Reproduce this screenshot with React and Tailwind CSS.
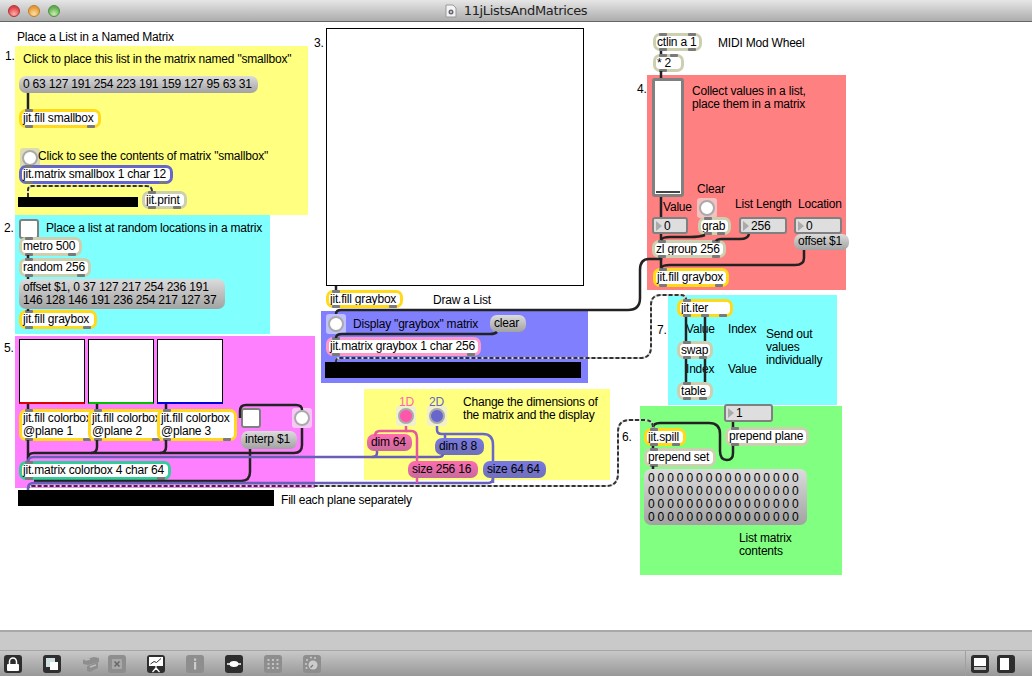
const cordDark = '#222'

function Tabs({ count, className }) {
  return (
    <div className={`absolute left-[3px] right-[3px] flex justify-between ${className}`}>
      {Array.from({ length: count }).map((_, i) => (
        <span key={i} className="w-[8px] h-[3px] rounded-[1px] bg-[#7a7a7a]" />
      ))}
    </div>
  )
}

function Obj({ className, tops = 1, bots = 2, children }) {
  return (
    <div className={`absolute rounded-[7px] border-[3px] bg-white ${className}`}>
      <div className="h-full overflow-hidden whitespace-pre pl-[1px] leading-[13px] text-black">{children}</div>
      <Tabs count={tops} className="-top-[3px]" />
      <Tabs count={bots} className="-bottom-[3px]" />
    </div>
  )
}

function Msg({ className, children }) {
  return (
    <div className={`absolute whitespace-pre rounded-[7px] pl-[4px] leading-[13px] text-black ${className}`}>
      {children}
    </div>
  )
}

function Num({ className, children }) {
  return (
    <div className={`absolute flex items-center rounded-[3px] border-2 border-[#808080] bg-[#dedede] text-black ${className}`}>
      <svg width="8" height="12" viewBox="0 0 8 12" className="ml-[1px] mr-[1px]">
        <path d="M1 1 L7 6 L1 11 Z" fill="#aaa" />
      </svg>
      {children}
    </div>
  )
}

function Bang({ className, fill = 'bg-white' }) {
  return (
    <div className={`absolute flex h-[20px] w-[20px] items-center justify-center rounded-[3px] ${className}`}>
      <span className={`h-[16px] w-[16px] rounded-full border-[2px] border-[#aaa] ${fill}`} />
    </div>
  )
}

function Toggle({ className }) {
  return <div className={`absolute h-[20px] w-[20px] rounded-[3px] border-[2px] border-[#808080] bg-white ${className}`} />
}

function Label({ className, children }) {
  return <div className={`absolute mt-[1px] whitespace-pre leading-[13px] ${className}`}>{children}</div>
}

function Dashed({ d }) {
  return (
    <g fill="none" strokeWidth="2">
      <path d={d} stroke="#d8d8d8" />
      <path d={d} stroke="#333" strokeDasharray="4 2" />
    </g>
  )
}

function Cords() {
  return (
    <svg viewBox="0 22 1032 608" className="absolute inset-0 h-full w-full">
      <g fill="none" stroke={cordDark} strokeWidth="2.5">
        <path d="M28 93V109" />
        <path d="M28 255V258M28 277V279M28 309V311" />
        <path d="M28 404V409M97 404V409M166 404V409" />
        <path d="M28 440V461" />
        <path d="M97 440V447Q97 453 91 453H34Q28 453 28 458" />
        <path d="M166 440V447Q166 453 160 453H91" />
        <path d="M302 428V445Q302 453 294 453H160" />
        <path d="M240 418V411Q240 405 246 405H296Q302 405 302 410" />
        <path d="M250 449V472Q250 481 241 481H34" />
        <path d="M336 286V290" />
        <path d="M661 258V259H649Q640 259 640 270V298Q640 310 628 310H341Q336 310 336 314" />
        <path d="M497 332Q495 334 490 334H342Q336 334 336 338" />
        <path d="M661 51V54M661 71V78M661 197V217M661 234V240M661 258V268" />
        <path d="M705 235Q700 237 690 237H670Q662 237 661 240" />
        <path d="M749 234Q748 239 740 239H722Q717 239 716 241" />
        <path d="M804 250V258Q804 265 795 265H670Q662 265 661 268" />
        <path d="M686 317V341M705 317V341M686 359V382M705 359V382" />
        <path d="M733 422V427" />
        <path d="M733 446V453Q733 460 727 460Q720 460 720 451V434Q720 423 709 423H660Q653 423 653 428" />
        <path d="M653 446V448M653 466V469" />
      </g>
      <Dashed d="M28 197V190Q28 186 32 186H146Q152 186 152 191" />
      <Dashed d="M336 362V361Q336 358 340 358H640Q651 358 651 347V305Q651 295 661 295H680Q686 295 686 299" />
      <Dashed d="M28 490V489Q28 486 33 486H606Q617 486 618 475V432Q618 420 630 420H645Q653 420 653 428" />
      <g fill="none" stroke="#6a5fb8" strokeWidth="2.5">
        <path d="M28 461V462Q28 457 34 457H438Q443 457 443 454" />
        <path d="M377 451V453Q377 457 372 457" />
        <path d="M28 490V488Q28 483 34 483H488Q493 483 493 478" />
      </g>
      <g fill="none" stroke="#e6579e" strokeWidth="2.5">
        <path d="M406 426V431H380Q375 431 375 436" />
        <path d="M406 431H411Q417 431 417 438V461M417 478V483" />
      </g>
      <g fill="none" stroke="#6666cc" strokeWidth="2.5">
        <path d="M437 426V430Q437 434 442 434H483Q493 434 493 445V461M493 478V483" />
        <path d="M445 434V438" />
      </g>
    </svg>
  )
}

function TitleBar() {
  return (
    <div className="relative flex h-[22px] shrink-0 items-center justify-center border-b border-[#666] bg-linear-to-b from-[#e6e6e6] to-[#adadad]">
      <div className="absolute left-[8px] top-[5px] flex gap-[8px]">
        <span className="h-[12px] w-[12px] rounded-full border border-[#a33] bg-[radial-gradient(circle_at_50%_80%,#ffb0a8,#e0404a_70%)]" />
        <span className="h-[12px] w-[12px] rounded-full border border-[#b97f2a] bg-[radial-gradient(circle_at_50%_80%,#ffe0a0,#e89a38_70%)]" />
        <span className="h-[12px] w-[12px] rounded-full border border-[#4f8f3f] bg-[radial-gradient(circle_at_50%_80%,#c8f0b0,#62ad52_70%)]" />
      </div>
      <div className="flex items-center gap-[7px] text-[13px] leading-[16px] text-[#222] [font-family:'DejaVu_Sans',sans-serif]">
        <svg width="12" height="14" viewBox="0 0 12 14">
          <path d="M1 1H8L11 4V13H1Z" fill="#f4f4f4" stroke="#999" />
          <circle cx="6" cy="8" r="2.5" fill="#667" />
          <circle cx="6" cy="8" r="1" fill="#ddd" />
        </svg>
        <span className="tracking-[-0.35px]">11jListsAndMatrices</span>
      </div>
    </div>
  )
}

function Icon({ dim, children, className = '' }) {
  return (
    <svg width="18" height="18" viewBox="0 0 18 18" className={className}>
      <rect width="18" height="18" rx="3" fill={dim ? '#8e8e8e' : '#2e2e2e'} />
      {children}
    </svg>
  )
}

function Toolbar() {
  return (
    <div className="shrink-0">
      <div className="h-[20px] border-t-2 border-[#a8a8a8] bg-[#c9c9c9]" />
      <div className="flex h-[26px] items-center border-t border-[#a6a6a6] bg-linear-to-b from-[#c8c8c8] to-[#989898] pl-[4px] pr-[17px]">
        <Icon>
          <rect x="3" y="9" width="12" height="7" rx="1" fill="#fff" />
          <path d="M5.5 9V6.5a3.5 3.5 0 0 1 7 0V9" fill="none" stroke="#fff" strokeWidth="1.5" />
        </Icon>
        <Icon className="ml-[21px]">
          <rect x="3" y="3" width="9" height="9" fill="#cfe0e2" />
          <rect x="7" y="7" width="8" height="8" fill="#fff" />
        </Icon>
        <svg width="18" height="18" viewBox="0 0 18 18" className="ml-[21px]">
          <path d="M1 5L12 2L17 3V7L6 10L1 9Z" fill="#8e8e8e" />
          <path d="M5 11L16 7V13L8 17L5 16Z" fill="#8e8e8e" />
          <path d="M3 5L8 4M8 12L14 10" stroke="#bdbdbd" strokeWidth="1.5" />
        </svg>
        <Icon dim className="ml-[8px]">
          <rect x="4" y="4" width="10" height="10" rx="1" fill="#a8a8a8" />
          <path d="M6.5 6.5L11.5 11.5M11.5 6.5L6.5 11.5" stroke="#666" strokeWidth="1.5" />
        </Icon>
        <Icon className="ml-[21px]">
          <rect x="2" y="2" width="14" height="9" fill="#fff" />
          <path d="M3.5 9L7 6.5L9.5 7.5L14 3.5" fill="none" stroke="#333" />
          <path d="M9 11V13M9 13L5.5 17M9 13L12.5 17" stroke="#fff" strokeWidth="1.2" />
        </Icon>
        <Icon dim className="ml-[21px]">
          <rect x="8" y="3.5" width="2.2" height="2.2" fill="#ccc" />
          <rect x="8" y="7" width="2.2" height="7.5" fill="#ccc" />
        </Icon>
        <Icon className="ml-[21px]">
          <path d="M2 9H16" stroke="#fff" strokeWidth="1.5" />
          <ellipse cx="9" cy="9" rx="4.5" ry="3" fill="#fff" />
        </Icon>
        <Icon dim className="ml-[21px]">
          <g fill="#c4c4c4">
            <rect x="3.5" y="4" width="2" height="2" /><rect x="8" y="4" width="2" height="2" /><rect x="12.5" y="4" width="2" height="2" />
            <rect x="3.5" y="8" width="2" height="2" /><rect x="8" y="8" width="2" height="2" /><rect x="12.5" y="8" width="2" height="2" />
            <rect x="3.5" y="12" width="2" height="2" /><rect x="8" y="12" width="2" height="2" /><rect x="12.5" y="12" width="2" height="2" />
          </g>
        </Icon>
        <Icon dim className="ml-[21px]">
          <circle cx="10" cy="10" r="4.5" fill="#ccc" />
          <path d="M10 10L7.5 12.5" stroke="#777" strokeWidth="1.2" />
          <g fill="#ccc">
            <circle cx="3" cy="9" r="1" /><circle cx="4" cy="5" r="1" /><circle cx="8" cy="2.5" r="1" /><circle cx="12" cy="3" r="1" /><circle cx="3.5" cy="13" r="1" />
          </g>
        </Icon>
        <div className="ml-auto mr-[5px] h-full w-px bg-[#a0a0a0]" />
        <Icon>
          <rect x="3" y="3" width="12" height="8" fill="#fff" />
          <rect x="3" y="12" width="12" height="3" fill="#bbb" />
        </Icon>
        <Icon className="ml-[8px]">
          <rect x="3" y="3" width="9" height="12" fill="#fff" />
        </Icon>
      </div>
    </div>
  )
}

export default function App() {
  return (
    <div className="flex h-[676px] w-[1032px] flex-col overflow-hidden bg-white text-[12px] tracking-[-0.2px] text-black [font-family:'Liberation_Sans',Arial,sans-serif]">
      <TitleBar />
      <div className="relative flex-1">
        {/* colored panels */}
        <div className="absolute left-[15px] top-[24px] h-[169px] w-[293px] bg-[#ffff80]" />
        <div className="absolute left-[15px] top-[193px] h-[119px] w-[255px] bg-[#80ffff]" />
        <div className="absolute left-[15px] top-[314px] h-[152px] w-[300px] bg-[#ff80ff]" />
        <div className="absolute left-[321px] top-[289px] h-[72px] w-[267px] bg-[#8080ff]" />
        <div className="absolute left-[364px] top-[367px] h-[91px] w-[246px] bg-[#ffff80]" />
        <div className="absolute left-[647px] top-[53px] h-[215px] w-[199px] bg-[#ff8080]" />
        <div className="absolute left-[668px] top-[273px] h-[110px] w-[169px] bg-[#80ffff]" />
        <div className="absolute left-[640px] top-[384px] h-[169px] w-[202px] bg-[#80ff80]" />

        {/* section 1 */}
        <Label className="left-[17px] top-[8px]">Place a List in a Named Matrix</Label>
        <Label className="left-[5px] top-[27px]">1.</Label>
        <Label className="left-[23px] top-[30px]">Click to place this list in the matrix named "smallbox"</Label>
        <Msg className="left-[19px] top-[54px] h-[17px] w-[239px] bg-linear-to-b from-[#dcdcdc] to-[#a2a2a2] pt-[2px]">0 63 127 191 254 223 191 159 127 95 63 31</Msg>
        <Obj className="left-[19px] top-[87px] h-[19px] w-[82px] border-[#ffd91a]">jit.fill smallbox</Obj>
        <Bang className="left-[20px] top-[126px] bg-[#dcdcb0]" />
        <Label className="left-[38px] top-[127px]">Click to see the contents of matrix "smallbox"</Label>
        <Obj className="left-[19px] top-[143px] h-[19px] w-[154px] border-[#6666cc]">jit.matrix smallbox 1 char 12</Obj>
        <div className="absolute left-[18px] top-[175px] h-[10px] w-[120px] bg-black" />
        <Obj className="left-[142px] top-[169px] h-[18px] w-[45px] border-[#ccd0b0]">jit.print</Obj>

        {/* section 2 */}
        <Label className="left-[4px] top-[199px]">2.</Label>
        <Toggle className="left-[19px] top-[197px]" />
        <Label className="left-[46px] top-[199px]">Place a list at random locations in a matrix</Label>
        <Obj className="left-[19px] top-[215px] h-[19px] w-[63px] border-[#ccd0b0]">metro 500</Obj>
        <Obj className="left-[19px] top-[236px] h-[19px] w-[72px] border-[#ccd0b0]">random 256</Obj>
        <Msg className="left-[19px] top-[257px] h-[30px] w-[206px] bg-linear-to-b from-[#dcdcdc] to-[#a2a2a2] pt-[2px]">{'offset $1, 0 37 127 217 254 236 191\n146 128 146 191 236 254 217 127 37'}</Msg>
        <Obj className="left-[19px] top-[288px] h-[19px] w-[78px] border-[#ffd91a]">jit.fill graybox</Obj>

        {/* section 5 */}
        <Label className="left-[4px] top-[319px]">5.</Label>
        <div className="absolute left-[19px] top-[317px] h-[65px] w-[66px] border border-b-2 border-black border-b-[#e00000] bg-white" />
        <div className="absolute left-[88px] top-[317px] h-[65px] w-[66px] border border-b-2 border-black border-b-[#00c000] bg-white" />
        <div className="absolute left-[157px] top-[317px] h-[65px] w-[66px] border border-b-2 border-black border-b-[#0000e0] bg-white" />
        <Obj className="left-[19px] top-[387px] h-[32px] w-[78px] border-[#ffd91a]">{'jit.fill colorbox\n@plane 1'}</Obj>
        <Obj className="left-[88px] top-[387px] h-[32px] w-[78px] border-[#ffd91a]">{'jit.fill colorbox\n@plane 2'}</Obj>
        <Obj className="left-[157px] top-[387px] h-[32px] w-[80px] border-[#ffd91a]">{'jit.fill colorbox\n@plane 3'}</Obj>
        <Toggle className="left-[241px] top-[386px]" />
        <Bang className="left-[292px] top-[386px] bg-[#f7c8f7]" />
        <Msg className="left-[241px] top-[409px] h-[18px] w-[56px] bg-linear-to-b from-[#dcdcdc] to-[#a2a2a2] pt-[2px]">interp $1</Msg>
        <Obj className="left-[19px] top-[439px] h-[19px] w-[152px] border-[#33cc99]">jit.matrix colorbox 4 char 64</Obj>
        <div className="absolute left-[18px] top-[468px] h-[16px] w-[256px] bg-black" />
        <Label className="left-[281px] top-[471px]">Fill each plane separately</Label>

        {/* section 3 */}
        <Label className="left-[314px] top-[14px]">3.</Label>
        <div className="absolute left-[326px] top-[6px] h-[258px] w-[258px] border border-black bg-white" />
        <Obj className="left-[326px] top-[268px] h-[18px] w-[77px] border-[#ffd91a]">jit.fill graybox</Obj>
        <Label className="left-[433px] top-[271px]">Draw a List</Label>
        <Bang className="left-[326px] top-[292px] bg-[#c0c0ff]" />
        <Label className="left-[353px] top-[295px]">Display "graybox" matrix</Label>
        <Msg className="left-[490px] top-[293px] h-[17px] w-[36px] bg-linear-to-b from-[#dcdcdc] to-[#a2a2a2] pt-[2px]">clear</Msg>
        <Obj className="left-[326px] top-[315px] h-[19px] w-[155px] border-[#ff99cc]">jit.matrix graybox 1 char 256</Obj>
        <div className="absolute left-[325px] top-[340px] h-[16px] w-[256px] bg-black" />

        {/* dimensions */}
        <Label className="left-[399px] top-[373px] text-[#ff66b3]">1D</Label>
        <Label className="left-[429px] top-[373px] text-[#6666cc]">2D</Label>
        <Bang className="left-[396px] top-[384px] bg-[#f0f0d0]" fill="bg-[#ff55aa]" />
        <Bang className="left-[427px] top-[384px] bg-[#f0f0d0]" fill="bg-[#6666cc]" />
        <Label className="left-[463px] top-[373px]">{'Change the dimensions of\nthe matrix and the display'}</Label>
        <Msg className="left-[367px] top-[412px] h-[17px] w-[45px] bg-linear-to-b from-[#ff6cb0] to-[#c86a9c] pt-[2px]">dim 64</Msg>
        <Msg className="left-[435px] top-[416px] h-[17px] w-[49px] bg-linear-to-b from-[#7878e4] to-[#7070b8] pt-[2px]">dim 8 8</Msg>
        <Msg className="left-[408px] top-[439px] h-[17px] w-[70px] bg-linear-to-b from-[#ff6cb0] to-[#c86a9c] pt-[2px]">size 256 16</Msg>
        <Msg className="left-[483px] top-[439px] h-[17px] w-[63px] bg-linear-to-b from-[#7878e4] to-[#7070b8] pt-[2px]">size 64 64</Msg>

        {/* section 4 */}
        <Obj className="left-[653px] top-[11px] h-[18px] w-[49px] border-[#ccd0b0]" tops={2} bots={2}>ctlin a 1</Obj>
        <Label className="left-[718px] top-[14px]">MIDI Mod Wheel</Label>
        <Obj className="left-[653px] top-[32px] h-[18px] w-[31px] border-[#ccd0b0]" tops={2} bots={1}>* 2</Obj>
        <Label className="left-[637px] top-[60px]">4.</Label>
        <div className="absolute left-[652px] top-[56px] h-[119px] w-[32px] rounded-[3px] border-[3px] border-[#808080] bg-white">
          <div className="absolute bottom-[1px] left-[1px] right-[1px] h-[2px] bg-[#444]" />
        </div>
        <Label className="left-[692px] top-[62px]">{'Collect values in a list,\nplace them in a matrix'}</Label>
        <Label className="left-[697px] top-[160px]">Clear</Label>
        <Label className="left-[663px] top-[178px]">Value</Label>
        <Bang className="left-[697px] top-[176px] bg-[#f5c0c0]" />
        <Label className="left-[735px] top-[175px]">List Length</Label>
        <Label className="left-[798px] top-[175px]">Location</Label>
        <Num className="left-[652px] top-[195px] h-[17px] w-[36px]">0</Num>
        <Obj className="left-[698px] top-[195px] h-[18px] w-[33px] border-[#ccd0b0]">grab</Obj>
        <Num className="left-[739px] top-[195px] h-[17px] w-[48px]">256</Num>
        <Num className="left-[794px] top-[195px] h-[17px] w-[48px]">0</Num>
        <Msg className="left-[794px] top-[212px] h-[16px] w-[55px] bg-linear-to-b from-[#dcdcdc] to-[#a2a2a2] pt-[1px]">offset $1</Msg>
        <Obj className="left-[652px] top-[218px] h-[18px] w-[74px] border-[#ccd0b0]" tops={2} bots={2}>zl group 256</Obj>
        <Obj className="left-[653px] top-[246px] h-[19px] w-[76px] border-[#ffd91a]">jit.fill graybox</Obj>

        {/* section 7 */}
        <Obj className="left-[677px] top-[277px] h-[18px] w-[56px] border-[#ffd91a]" tops={1} bots={3}>jit.iter</Obj>
        <Label className="left-[657px] top-[301px]">7.</Label>
        <Label className="left-[686px] top-[300px]">Value</Label>
        <Label className="left-[728px] top-[300px]">Index</Label>
        <Label className="left-[766px] top-[305px]">{'Send out\nvalues\nindividually'}</Label>
        <Obj className="left-[677px] top-[319px] h-[18px] w-[36px] border-[#ccd0b0]">swap</Obj>
        <Label className="left-[686px] top-[340px]">Index</Label>
        <Label className="left-[728px] top-[340px]">Value</Label>
        <Obj className="left-[677px] top-[360px] h-[18px] w-[36px] border-[#ccd0b0]">table</Obj>

        {/* section 6 */}
        <Num className="left-[724px] top-[382px] h-[18px] w-[49px]">1</Num>
        <Label className="left-[622px] top-[408px]">6.</Label>
        <Obj className="left-[725px] top-[405px] h-[19px] w-[84px] border-[#ccd0b0]" bots={1}>prepend plane</Obj>
        <Obj className="left-[644px] top-[406px] h-[18px] w-[42px] border-[#ffd91a]">jit.spill</Obj>
        <Obj className="left-[644px] top-[426px] h-[19px] w-[72px] border-[#ccd0b0]" bots={1}>prepend set</Obj>
        <Msg className="left-[644px] top-[447px] h-[56px] w-[163px] bg-linear-to-b from-[#dcdcdc] to-[#a2a2a2] pt-[3px]">
          {'0 0 0 0 0 0 0 0 0 0 0 0 0 0 0 0\n0 0 0 0 0 0 0 0 0 0 0 0 0 0 0 0\n0 0 0 0 0 0 0 0 0 0 0 0 0 0 0 0\n0 0 0 0 0 0 0 0 0 0 0 0 0 0 0 0'}
        </Msg>
        <Label className="left-[739px] top-[509px]">{'List matrix\ncontents'}</Label>

        <Cords />
      </div>
      <Toolbar />
    </div>
  )
}
